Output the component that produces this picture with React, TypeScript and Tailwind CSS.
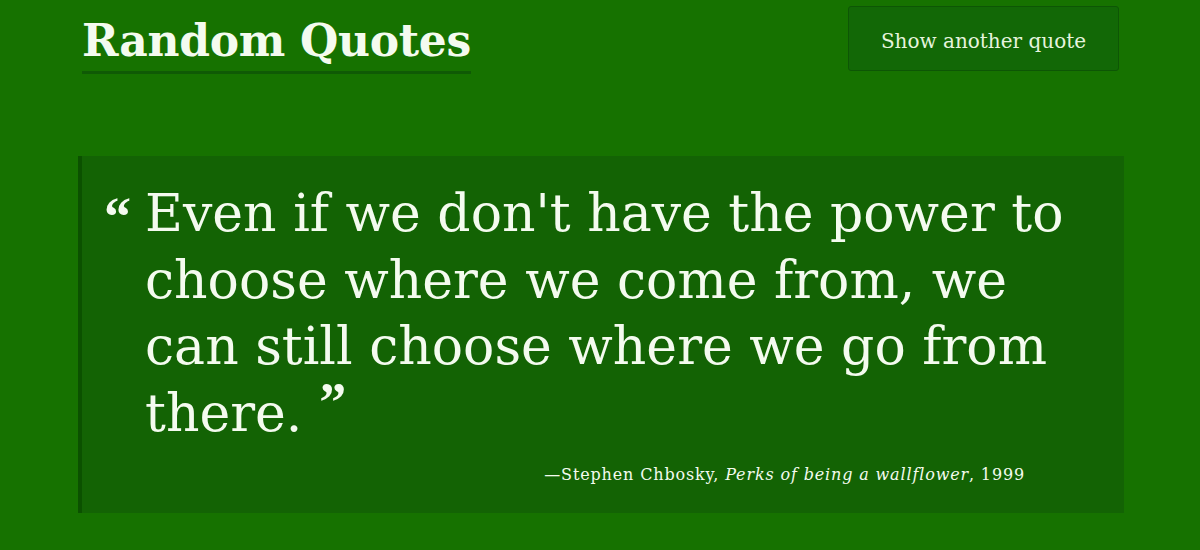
export default function App() {
  const serif = { fontFamily: '"DejaVu Serif", "Liberation Serif", serif' };
  const marks = { fontFamily: '"Liberation Serif", "DejaVu Serif", serif' };

  return (
    <div className="min-h-[550px] w-full bg-[#167200] text-[#f4fbef]" style={serif}>
      <header className="flex items-start justify-between pl-[82px] pr-[81px] pt-[6px]">
        <h1 className="mt-[8px] border-b-[3px] border-[#0f5a05] pb-[3px] text-[44px] font-bold leading-[54px] tracking-[-0.3px]">
          Random Quotes
        </h1>
        <button className="h-[65px] w-[271px] rounded-[3px] border border-[#0d5605] bg-[#126806] pt-[4px] text-[20px] text-[#e6f4de]">
          Show another quote
        </button>
      </header>

      <blockquote className="ml-[78px] mr-[76px] mt-[82px] border-l-[4px] border-[#0b5100] bg-[#136304] pb-[26px] pl-[22px] pr-[40px] pt-[24px]">
        <div className="flex items-start">
          <span className="w-[41px] shrink-0 pt-[10px] text-[54px] font-bold leading-none" style={marks}>
            “
          </span>
          <p className="w-[945px] text-[52px] leading-[66.5px]">
            Even if we don't have the power to choose where we come from, we can still choose where we go from there.
            <span className="ml-[17px] inline-block h-[36px] overflow-visible align-top text-[54px] font-bold leading-[44px]" style={marks}>
              ”
            </span>
          </p>
        </div>
        <p className="mr-[59px] mt-[17px] text-right text-[16px] tracking-[0.85px]">
          —Stephen Chbosky, <cite className="italic">Perks of being a wallflower</cite>, 1999
        </p>
      </blockquote>
    </div>
  );
}
